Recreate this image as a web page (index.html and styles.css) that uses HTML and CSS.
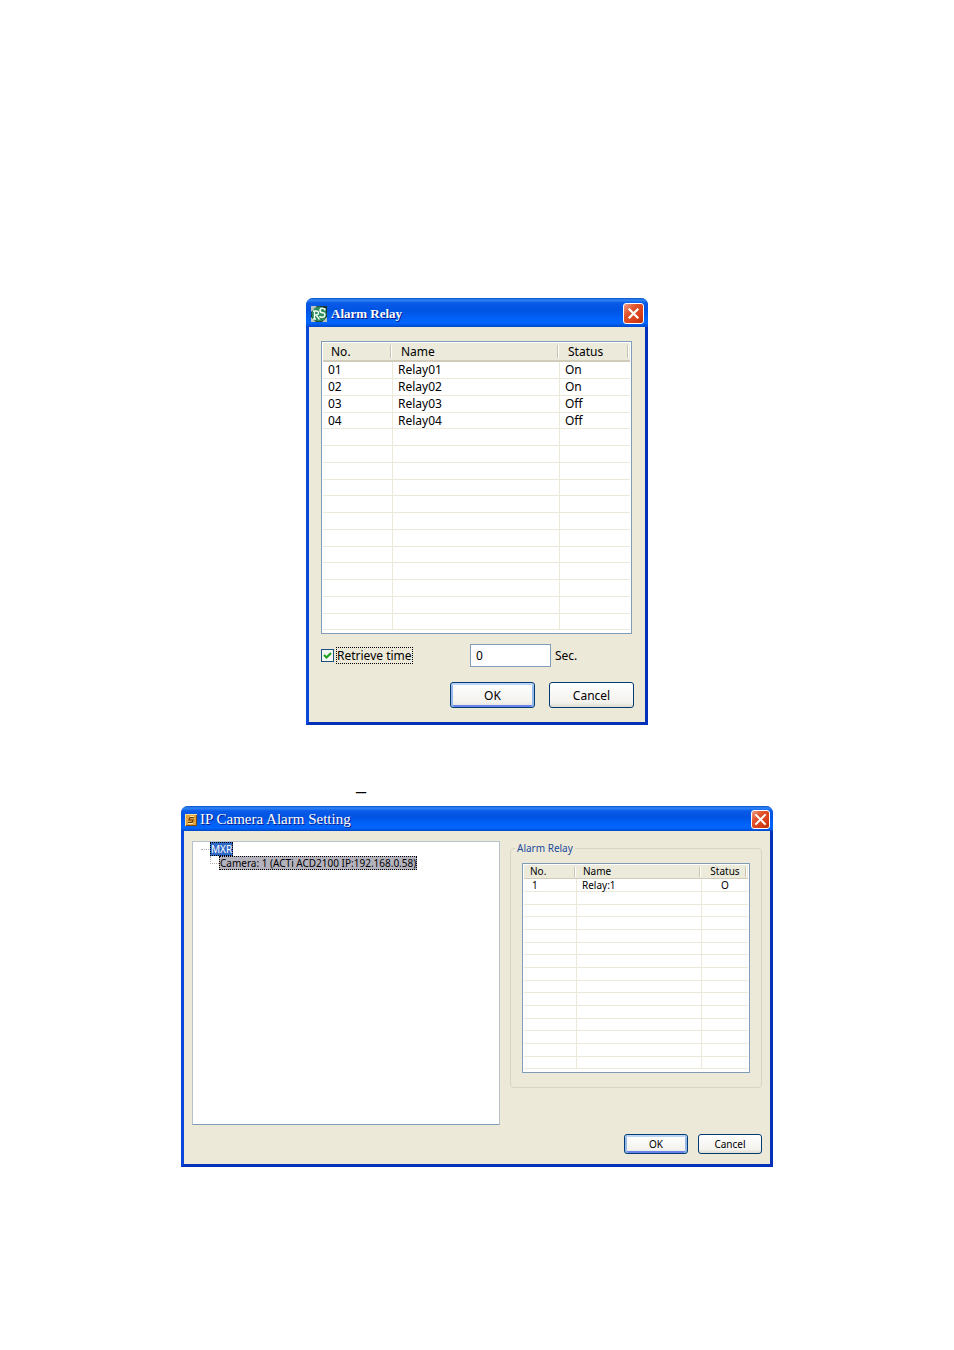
FILE: index.html
```html
<!DOCTYPE html>
<html lang="en">
<head>
    <meta charset="UTF-8">
    <title>Alarm Relay</title>
    <link rel="stylesheet" href="styles.css">
</head>
<body>
    <form class="window window--relay">
        <div class="titlebar">
            <svg class="titlebar__icon" viewBox="0 0 16 16">
                <rect width="16" height="16" fill="#17352f"/>
                <circle cx="8" cy="8" r="7.5" fill="#2f8a5c"/>
                <path d="M0 0h6L0 6zM16 16h-5l5-5zM0 16v-5l5 5z" fill="#b9c6bd"/>
                <path d="M3.500 13V5M2 5h3q2.500 0 2.500 2T5 9H3.500M5 9l3.500 4.500M2 13h3" fill="none" stroke="#f2fff6" stroke-width="1.300"/>
                <path d="M14 4.500V2.500M14 3.500Q13 2 11 2.200T9 4.500t2.500 2.200T13.800 9t-2.500 2.300T8.600 10" fill="none" stroke="#f2fff6" stroke-width="1.500"/>
            </svg>
            <span class="titlebar__text">Alarm Relay</span>
            <button type="button" class="titlebar__close" aria-label="Close">
                <svg viewBox="0 0 20 20"><path d="M5 5l10 10M15 5L5 15" stroke="#fff" stroke-width="2.400"/></svg>
            </button>
        </div>
        <div class="window__body">
            <div class="list">
                <table class="list__table">
                    <colgroup><col class="col-no"><col><col class="col-status"></colgroup>
                    <thead>
                        <tr><th>No.</th><th>Name</th><th>Status</th></tr>
                    </thead>
                    <tbody>
                        <tr><td>01</td><td>Relay01</td><td>On</td></tr>
                        <tr><td>02</td><td>Relay02</td><td>On</td></tr>
                        <tr><td>03</td><td>Relay03</td><td>Off</td></tr>
                        <tr><td>04</td><td>Relay04</td><td>Off</td></tr>
                        <tr><td></td><td></td><td></td></tr>
                        <tr><td></td><td></td><td></td></tr>
                        <tr><td></td><td></td><td></td></tr>
                        <tr><td></td><td></td><td></td></tr>
                        <tr><td></td><td></td><td></td></tr>
                        <tr><td></td><td></td><td></td></tr>
                        <tr><td></td><td></td><td></td></tr>
                        <tr><td></td><td></td><td></td></tr>
                        <tr><td></td><td></td><td></td></tr>
                        <tr><td></td><td></td><td></td></tr>
                        <tr><td></td><td></td><td></td></tr>
                        <tr><td></td><td></td><td></td></tr>
                    </tbody>
                </table>
            </div>
            <div class="retrieve">
                <input type="checkbox" class="retrieve__check" id="retrieve" checked>
                <label class="retrieve__label" for="retrieve">Retrieve time</label>
                <input type="text" class="retrieve__input" id="seconds" value="0">
                <label for="seconds">Sec.</label>
            </div>
            <div class="buttons">
                <button type="button" class="button button--default">OK</button>
                <button type="button" class="button">Cancel</button>
            </div>
        </div>
    </form>

    <p class="note">_</p>

    <form class="window window--camera">
        <div class="titlebar">
            <svg class="titlebar__icon" viewBox="0 0 12 12">
                <rect width="12" height="12" fill="#f6dc9a"/>
                <rect x="1" y="1" width="11" height="11" fill="#7a4a12"/>
                <rect x="1" y="1" width="10" height="10" fill="#e3a23c"/>
                <path d="M9 3.500H5L4 6h4L7 8.500H3" fill="none" stroke="#6b3d08" stroke-width="1.200"/>
                <path d="M5 2.500h4M3 9.500h5" stroke="#ffe9a8"/>
            </svg>
            <span class="titlebar__text">IP Camera Alarm Setting</span>
            <button type="button" class="titlebar__close" aria-label="Close">
                <svg viewBox="0 0 20 20"><path d="M4 4l12 12M16 4L4 16" stroke="#fff" stroke-width="2.400"/></svg>
            </button>
        </div>
        <div class="window__body">
            <div class="panes">
                <ul class="tree">
                    <li>
                        <span class="tree__item tree__item--root">MXR</span>
                        <ul>
                            <li><span class="tree__item tree__item--selected">Camera: 1 (ACTi ACD2100 IP:192.168.0.58)</span></li>
                        </ul>
                    </li>
                </ul>
                <fieldset class="group">
                    <legend>Alarm Relay</legend>
                    <div class="list">
                        <table class="list__table">
                            <colgroup><col class="col-no"><col><col class="col-status"></colgroup>
                            <thead>
                                <tr><th>No.</th><th>Name</th><th>Status</th></tr>
                            </thead>
                            <tbody>
                                <tr><td>1</td><td>Relay:1</td><td>O</td></tr>
                                <tr><td></td><td></td><td></td></tr>
                                <tr><td></td><td></td><td></td></tr>
                                <tr><td></td><td></td><td></td></tr>
                                <tr><td></td><td></td><td></td></tr>
                                <tr><td></td><td></td><td></td></tr>
                                <tr><td></td><td></td><td></td></tr>
                                <tr><td></td><td></td><td></td></tr>
                                <tr><td></td><td></td><td></td></tr>
                                <tr><td></td><td></td><td></td></tr>
                                <tr><td></td><td></td><td></td></tr>
                                <tr><td></td><td></td><td></td></tr>
                                <tr><td></td><td></td><td></td></tr>
                                <tr><td></td><td></td><td></td></tr>
                                <tr><td></td><td></td><td></td></tr>
                            </tbody>
                        </table>
                    </div>
                </fieldset>
            </div>
            <div class="buttons">
                <button type="button" class="button button--default">OK</button>
                <button type="button" class="button">Cancel</button>
            </div>
        </div>
    </form>
</body>
</html>
```

FILE: styles.css
```css
*{
    box-sizing: border-box;
}
body{
    margin: 0;
    padding: 298px 16px 183px;
    background: #fff;
    color: #000;
    font-family: "Noto Sans", sans-serif;
    font-size: 12px;
}

/* window frame */
.window{
    width: 100%;
    margin: 0 auto;
    border: 3px solid #0a48dc;
    border-top: 0;
    border-right-color: #0431b8;
    border-bottom-color: #0431b8;
    border-radius: 7px 7px 0 0;
    background: #ece9d8;
}
.window--relay{
    max-width: 342px;
}
.window--camera{
    max-width: 592px;
    font-size: 10px;
}
.titlebar{
    display: flex;
    align-items: center;
    height: 29px;
    margin: 0 -3px;
    padding: 2px 4px 0 5px;
    border-radius: 7px 7px 0 0;
    background: linear-gradient(#0a50c8 0, #2f86f6 2px, #0a5ae8 5px, #0053e1 12px, #0062fa 21px, #0066ff 25px, #0048c8 29px);
    color: #fff;
    font-family: "Liberation Serif", serif;
}
.titlebar__icon{
    width: 16px;
    height: 16px;
    margin-right: 4px;
}
.titlebar__text{
    flex: 1;
    font-size: 13px;
    font-weight: bold;
    text-shadow: 1px 1px 0 #0a1883;
}
.titlebar__close{
    display: flex;
    width: 21px;
    height: 21px;
    padding: 0;
    border: 1px solid #fff;
    border-radius: 3px;
    background: linear-gradient(135deg, #f0a088 0, #e2532c 35%, #d8401a 70%, #b8300c 100%);
}
.titlebar__close svg{
    width: 19px;
    height: 19px;
}
.window--camera .titlebar{
    height: 25px;
    padding: 2px 3px 0 4px;
    background: linear-gradient(#0a50c8 0, #2f86f6 2px, #0a5ae8 5px, #0053e1 11px, #0062fa 18px, #0066ff 22px, #0048c8 25px);
}
.window--camera .titlebar__icon{
    width: 12px;
    height: 12px;
    margin-right: 3px;
}
.window--camera .titlebar__text{
    font-size: 15px;
    font-weight: normal;
}
.window--camera .titlebar__close{
    width: 19px;
    height: 19px;
}
.window--camera .titlebar__close svg{
    width: 17px;
    height: 17px;
}

/* list with grid lines */
.list{
    padding: 1px 1px 3px;
    border: 1px solid #7f9db9;
    background: #fff;
}
.list__table{
    width: 100%;
    table-layout: fixed;
    border-collapse: separate;
    border-spacing: 0;
}
.list th,
.list td{
    padding: 0 5px;
    text-align: left;
    font-weight: normal;
    white-space: nowrap;
}
.list th{
    height: 19px;
    padding: 1px 8px 0;
    border-bottom: 2px solid #d0ccb9;
    background: linear-gradient(#c7c5b2, #c7c5b2) no-repeat right 2px center / 1px 13px,
                linear-gradient(#fff, #fff) no-repeat right 1px center / 1px 13px,
                #ebeadb;
    line-height: 16px;
}
.list td{
    height: 17px;
    border-right: 1px solid #ece9d8;
    border-bottom: 1px solid #ece9d8;
    line-height: 16px;
}
.list td:last-child{
    border-right: 0;
}
.window--relay tr:nth-child(4n) td{
    height: 16px;
    line-height: 15px;
}
.col-no,
.col-status{
    width: 70px;
}

/* alarm relay dialog */
.window--relay .window__body{
    padding: 14px 13px 14px 12px;
}
.retrieve{
    display: flex;
    align-items: center;
    height: 23px;
    margin: 10px 0 15px;
}
.retrieve__check{
    appearance: none;
    width: 13px;
    height: 13px;
    margin: 0 2px 0 0;
    border: 1px solid #1c5180;
    background: #f6f6f2;
}
.retrieve__check:checked{
    background: url("data:image/svg+xml,%3Csvg xmlns='http://www.w3.org/2000/svg' viewBox='0 0 11 11'%3E%3Cpath d='M2 5l2.500 2.500L9 3' fill='none' stroke='%2321a121' stroke-width='2.200'/%3E%3C/svg%3E") #f6f6f2;
}
.retrieve__label{
    width: 77px;
    height: 17px;
    border: 1px dotted #000;
    line-height: 15px;
    white-space: nowrap;
}
.retrieve__input{
    width: 81px;
    height: 23px;
    margin: 0 4px 0 auto;
    padding: 0 5px;
    border: 1px solid #7f9db9;
    background: #fff;
    color: #000;
    font: inherit;
}
.retrieve__input + label{
    width: 77px;
}

.buttons{
    display: flex;
    justify-content: flex-end;
    gap: 14px;
}
.window--relay .buttons{
    margin-right: -2px;
}
.button{
    width: 85px;
    height: 26px;
    padding: 0;
    border: 1px solid #003c74;
    border-radius: 3px;
    background: linear-gradient(#fff, #f3f2ee 80%, #dfdcd0);
    color: #000;
    font: inherit;
}
.button--default{
    box-shadow: inset 0 2px #bcd4f6, inset 2px 0 #98b8ea, inset -2px 0 #98b8ea, inset 0 -2px #6982ee;
}

.note{
    margin: 49px auto 14px;
    padding-left: 175px;
    max-width: 592px;
    font-family: "Liberation Serif", serif;
    font-size: 20px;
    line-height: 18px;
}

/* camera dialog */
.window--camera .window__body{
    padding: 10px 8px 10px;
}
.panes{
    display: flex;
    gap: 10px;
    align-items: flex-start;
}
.tree{
    flex: 1;
    height: 284px;
    margin: 0;
    padding: 0 8px;
    border: 1px solid #b5c3cf;
    border-bottom-color: #7f9db9;
    background: #fff;
    list-style: none;
}
.tree ul{
    margin: 0 0 0 17px;
    padding: 0;
    list-style: none;
}
.tree li{
    line-height: 12px;
}
.tree__item{
    display: inline-block;
    border: 1px dotted #000;
    white-space: nowrap;
    vertical-align: top;
}
.tree__item--root{
    margin-left: 1px;
    background: #316ac5;
    color: #fff;
}
.tree__item--selected{
    background: #b4b2bd;
}
.tree li::before{
    content: "";
    float: left;
    width: 8px;
    height: 7px;
    border-bottom: 1px dotted #b0b0b0;
}
.tree ul li::before{
    margin-left: -8px;
    border-left: 1px dotted #b0b0b0;
}
.group{
    width: 252px;
    margin: 0;
    padding: 8px 11px 14px;
    border: 1px solid #d8d5c3;
    border-radius: 4px;
}
.group legend{
    margin-left: -7px;
    padding: 0 2px;
    color: #1c4a9c;
    line-height: 14px;
}
.window--camera .list th{
    height: 14px;
    padding: 0 6px;
    border-bottom-width: 1px;
    line-height: 13px;
    background-size: 1px 10px, 1px 10px, auto;
}
.window--camera .list td{
    height: 13px;
    line-height: 12px;
}
.window--camera .list tr:nth-child(3n) td{
    height: 12px;
    line-height: 11px;
}
.window--camera .list td:first-child{
    padding-left: 8px;
}
.window--camera .list td:last-child,
.window--camera .list th:last-child{
    text-align: center;
}
.window--camera .col-no{
    width: 53px;
}
.window--camera .col-status{
    width: 46px;
}
.window--camera .buttons{
    gap: 10px;
    margin-top: 9px;
}
.window--camera .button{
    width: 64px;
    height: 20px;
}
```
